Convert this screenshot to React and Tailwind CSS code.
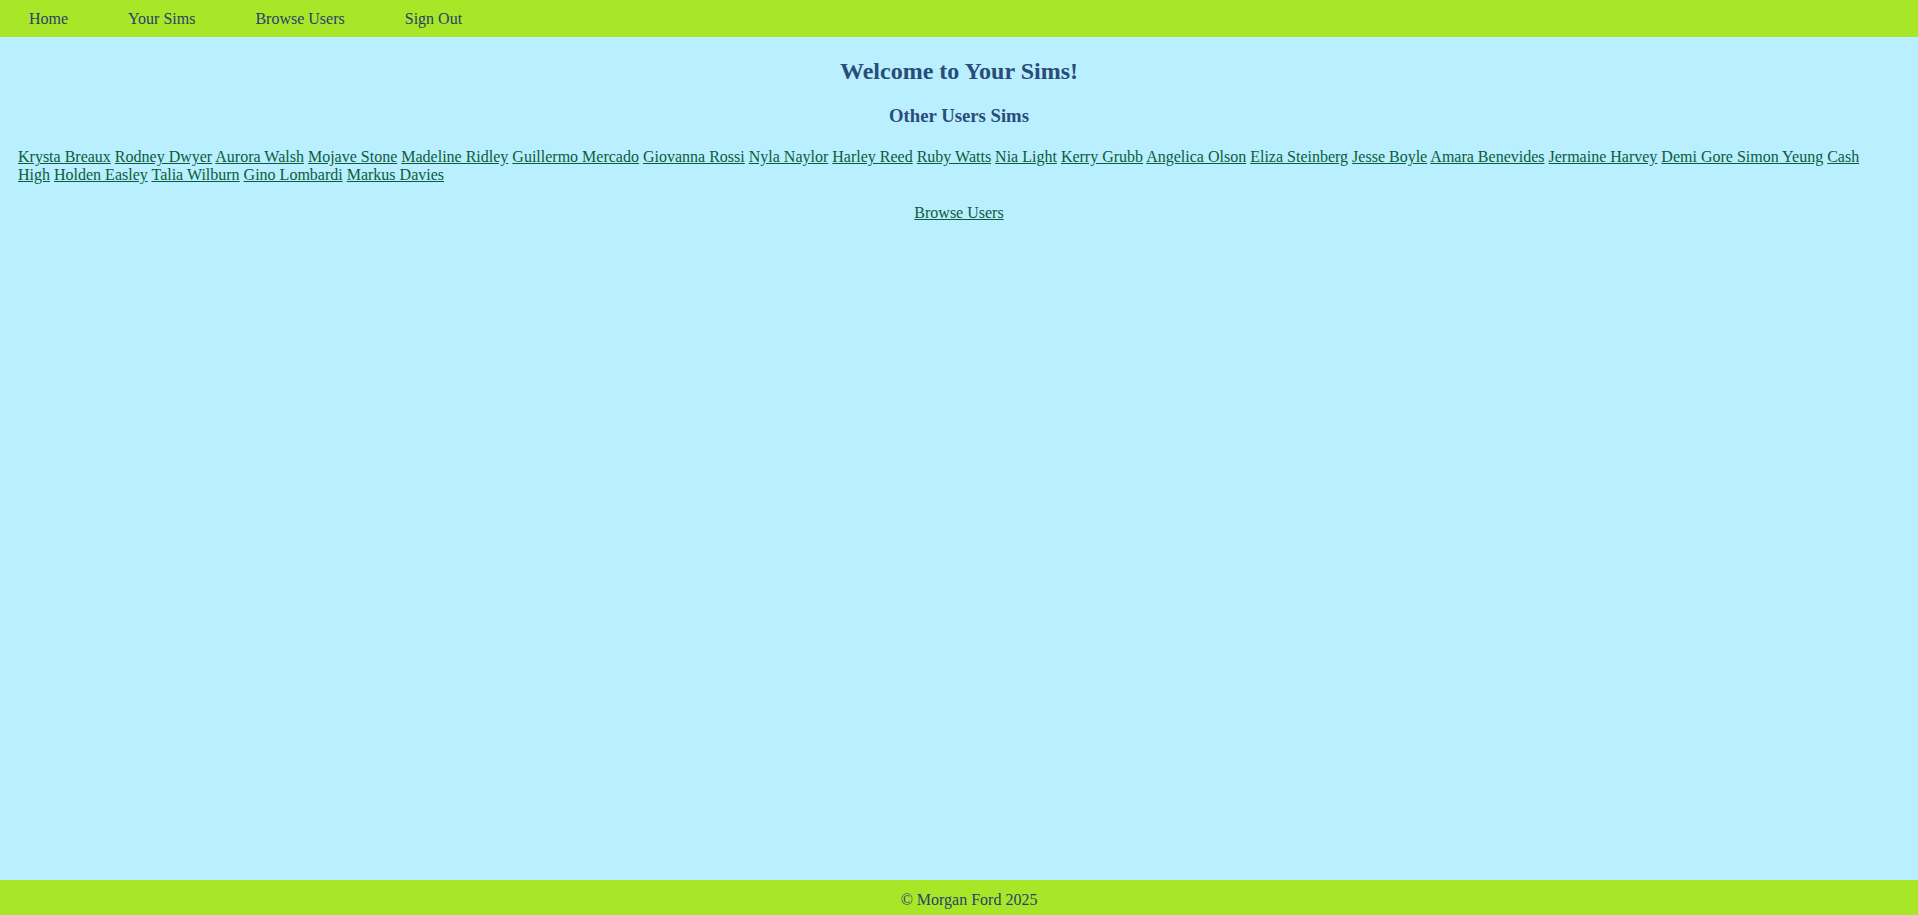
export default function App() {
  const sims = [
    "Krysta Breaux", "Rodney Dwyer", "Aurora Walsh", "Mojave Stone", "Madeline Ridley",
    "Guillermo Mercado", "Giovanna Rossi", "Nyla Naylor", "Harley Reed", "Ruby Watts",
    "Nia Light", "Kerry Grubb", "Angelica Olson", "Eliza Steinberg", "Jesse Boyle",
    "Amara Benevides", "Jermaine Harvey", "Demi Gore Simon Yeung", "Cash High",
    "Holden Easley", "Talia Wilburn", "Gino Lombardi", "Markus Davies",
  ];
  const font = { fontFamily: '"Liberation Serif", "Times New Roman", serif' };
  return (
    <div style={font} className="min-h-[915px] flex flex-col bg-[#b9effe] text-[#294c78] text-[16px]">
      <nav className="h-[37px] bg-[#a8e628] flex items-center pl-[29px] gap-[60px] text-[#2a3f6b]">
        <a href="#">Home</a>
        <a href="#">Your Sims</a>
        <a href="#">Browse Users</a>
        <a href="#">Sign Out</a>
      </nav>
      <main className="flex-1">
        <h2 className="text-center font-bold text-[24px] leading-[28px] mt-[20px] mb-[20px]">Welcome to Your Sims!</h2>
        <h3 className="text-center font-bold text-[18.72px] leading-[21px]">Other Users Sims</h3>
        <p className="leading-[18px] mt-[22px] pl-[18px] pr-[30px]">
          {sims.map((s, i) => (
            <span key={i}>
              <a href="#" className="underline text-[#0c5c3c]">{s}</a>{" "}
            </span>
          ))}
        </p>
        <p className="text-center mt-[17px]">
          <a href="#" className="underline text-[#0c5c3c]">Browse Users</a>
        </p>
      </main>
      <footer className="h-[35px] bg-[#a8e628] flex items-center justify-center pt-[4px] pl-[20px] text-[#2a3f6b]">
        © Morgan Ford 2025
      </footer>
    </div>
  );
}
